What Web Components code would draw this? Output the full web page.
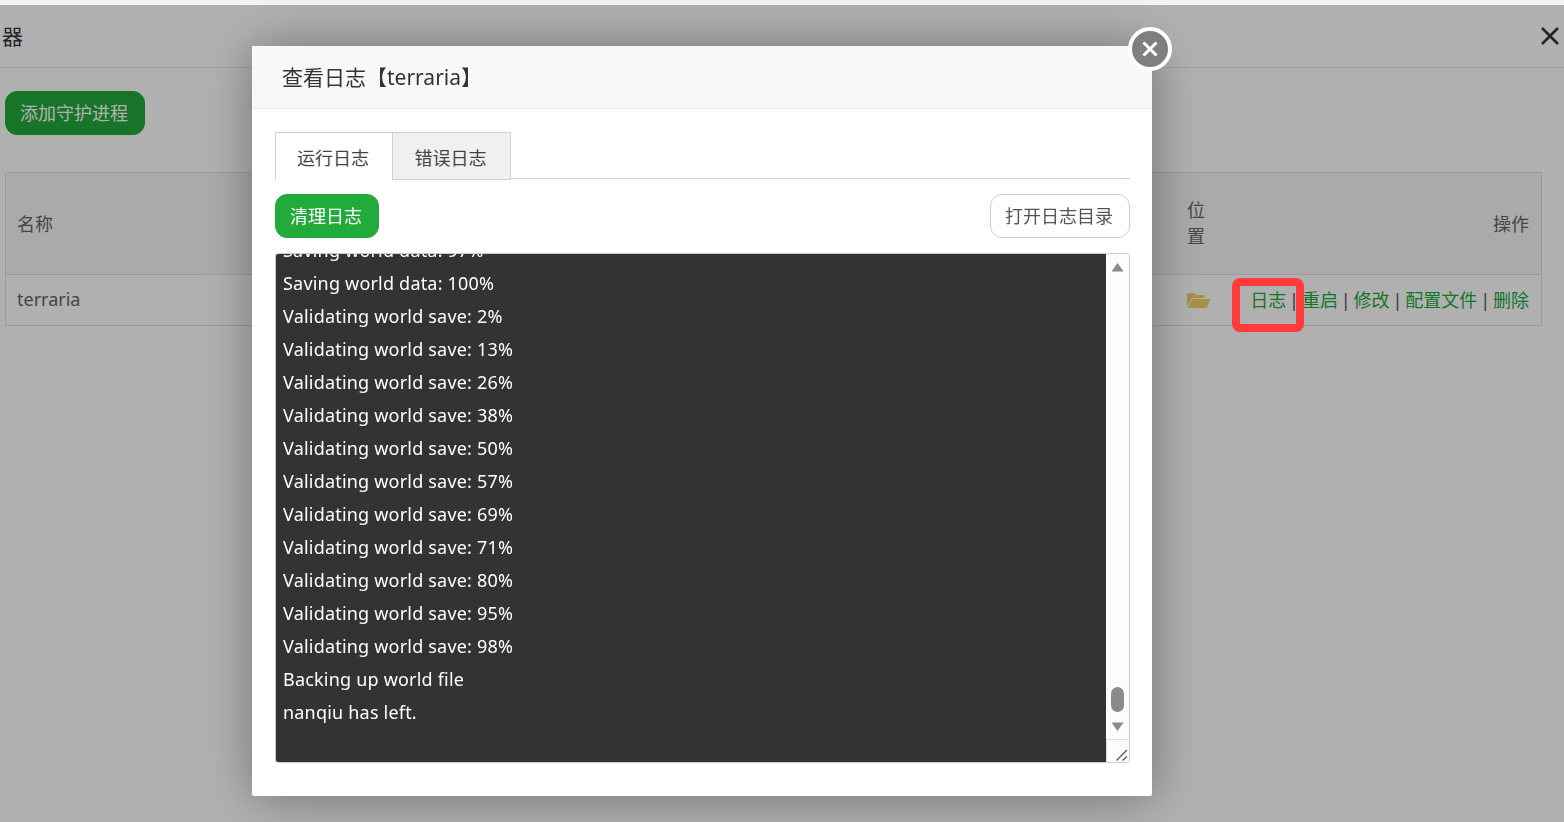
<!DOCTYPE html>
<html lang="zh">
<head>
<meta charset="utf-8">
<title>查看日志</title>
<style>
html, body {
    margin: 0;
    height: 100%;
    overflow: hidden;
    background: #fff;
    color: #333;
    font: 18px "Noto Sans", "Noto Sans CJK SC", sans-serif;
}
</style>
</head>
<body>
<app-page>
    <page-bar slot="bar" title-text="器"></page-bar>
    <act-button tone="solid" slot="action">添加守护进程</act-button>
    <proc-table></proc-table>
</app-page>
<log-modal heading="查看日志【terraria】"></log-modal>

<script>
class AppPage extends HTMLElement {
    constructor() {
        super();
        this.attachShadow({ mode: 'open' }).innerHTML = `
<style>
:host { display: block; border-top: 5px solid #f3f3f3; }
.action { display: flex; padding: 23px 5px 37px; }
</style>
<slot name="bar"></slot>
<div class="action"><slot name="action"></slot></div>
<slot></slot>
`;
    }
}
customElements.define('app-page', AppPage);

class PageBar extends HTMLElement {
    constructor() {
        super();
        this.attachShadow({ mode: 'open' }).innerHTML = `
<style>
:host { display: flex; align-items: center; justify-content: space-between; height: 60px; border-bottom: 1px solid #e6e6e6; padding: 0 5px 2px 2px; font-size: 21px; }
svg { display: block; margin-top: 2px; }
</style>
<span id="t"></span>
<svg width="18" height="18" viewBox="0 0 18 18"><path d="M1 1 17 17M17 1 1 17" stroke="#333" stroke-width="2.6" fill="none"/></svg>
`;
        this.shadowRoot.getElementById('t').textContent = this.getAttribute('title-text');
    }
}
customElements.define('page-bar', PageBar);

class ActButton extends HTMLElement {
    constructor() {
        super();
        this.attachShadow({ mode: 'open' }).innerHTML = `
<style>
:host { display: inline-flex; align-items: center; justify-content: center; box-sizing: border-box; height: 44px; padding: 0 16px 2px 14px; border-radius: 12px; background: #fff; border: 1px solid #ccc; color: #555; white-space: nowrap; }
:host([tone="solid"]) { background: #22aa3c; border-color: #22aa3c; color: #fff; }
</style>
<slot></slot>
`;
    }
}
customElements.define('act-button', ActButton);

class ProcTable extends HTMLElement {
    constructor() {
        super();
        this.attachShadow({ mode: 'open' }).innerHTML = `
<style>
:host { display: block; margin: 0 22px 0 5px; border: 1px solid #e0e0e0; color: #666; }
.row { display: grid; grid-template-columns: 1fr 45px 309px; align-items: center; box-sizing: border-box; padding-bottom: 2px; }
.head { height: 102px; background: #f6f6f6; border-bottom: 1px solid #e0e0e0; }
.body { height: 50px; }
.name { padding-left: 11px; }
.pos { width: 20px; line-height: 26px; }
.ops { text-align: right; padding-right: 12px; white-space: nowrap; }
a { color: #22aa3c; text-decoration: none; }
.sep { color: #555; margin: 0 2.9px; }
.mark { position: absolute; left: 1232px; top: 278px; width: 72px; height: 54px; box-sizing: border-box; border: 8px solid #ff3b3b; border-radius: 8px; z-index: 30; }
svg { display: block; margin-top: 2px; }
</style>
<div class="row head">
    <div class="name">名称</div>
    <div class="pos">位置</div>
    <div class="ops">操作</div>
</div>
<div class="row body">
    <div class="name">terraria</div>
    <div><svg width="24" height="17" viewBox="0 0 24 17"><path d="M0 15V2.500Q0 1 1.500 1H7l2 2h7q1.500 0 1.500 1.500V6H6Q4.500 6 4 7.500Z" fill="#f0d264"/><path d="M5 7H23.500L19.500 16H1Z" fill="#f0d264"/></svg></div>
    <div class="ops"><a>日志</a><span class="sep">|</span><a>重启</a><span class="sep">|</span><a>修改</a><span class="sep">|</span><a>配置文件</a><span class="sep">|</span><a>删除</a></div>
</div>
<div class="mark"></div>
`;
    }
}
customElements.define('proc-table', ProcTable);

class LogView extends HTMLElement {
    constructor() {
        super();
        const lines = [
            'Saving world data: 97%',
            'Saving world data: 100%',
            'Validating world save: 2%',
            'Validating world save: 13%',
            'Validating world save: 26%',
            'Validating world save: 38%',
            'Validating world save: 50%',
            'Validating world save: 57%',
            'Validating world save: 69%',
            'Validating world save: 71%',
            'Validating world save: 80%',
            'Validating world save: 95%',
            'Validating world save: 98%',
            'Backing up world file',
            'nanqiu has left.'
        ];
        this.attachShadow({ mode: 'open' }).innerHTML = `
<style>
:host { display: flex; height: 510px; box-sizing: border-box; border: 1px solid #ccc; border-radius: 3px; overflow: hidden; }
.text { flex: 1; background: #333; color: #fff; overflow: hidden; padding-left: 7px; }
.lines { margin-top: -20px; line-height: 33px; letter-spacing: .2px; }
.lines div { white-space: nowrap; }
.bar { width: 23px; background: #fcfcfc; display: flex; flex-direction: column; align-items: center; }
.track { flex: 1; width: 100%; display: flex; flex-direction: column; align-items: center; padding-top: 8px; box-sizing: border-box; }
.thumb { width: 13px; height: 25px; border-radius: 7px; background: #8a8a8a; margin-top: 415px; }
.down { margin-top: 10px; }
.corner { width: 23px; height: 23px; border-top: 1px solid #ddd; border-left: 1px solid #ddd; box-sizing: border-box; }
svg { display: block; }
</style>
<div class="text"><div class="lines">${lines.map(l => `<div>${l}</div>`).join('')}</div></div>
<div class="bar">
    <div class="track">
        <svg width="13" height="10" viewBox="0 0 13 10"><path d="M6.500 1 12.500 9.500H.5Z" fill="#8a8a8a"/></svg>
        <div class="thumb"></div>
        <svg class="down" width="13" height="10" viewBox="0 0 13 10"><path d="M.5.5H12.500L6.500 9Z" fill="#8a8a8a"/></svg>
    </div>
    <div class="corner"><svg width="22" height="22" viewBox="0 0 22 22"><path d="M9.500 20.500 20 10M15.500 20.500 20 16.500" stroke="#555" stroke-width="1.300" fill="none"/></svg></div>
</div>
`;
    }
}
customElements.define('log-view', LogView);

class LogModal extends HTMLElement {
    constructor() {
        super();
        this.attachShadow({ mode: 'open' }).innerHTML = `
<style>
:host { position: fixed; inset: 5px 0 0 0; background: rgba(0,0,0,.31); display: block; z-index: 10; }
.box { position: absolute; left: 252px; top: 41px; width: 900px; height: 750px; background: #fff; border-radius: 2px; box-shadow: 1px 1px 50px rgba(0,0,0,.36); display: flex; flex-direction: column; }
.title { height: 63px; box-sizing: border-box; padding: 0 0 3px 30px; background: #f8f8f8; border-bottom: 1px solid #eee; display: flex; align-items: center; font-size: 21px; color: #333; }
.main { padding: 23px 22px 0 23px; }
.tabs { display: flex; height: 48px; position: relative; box-sizing: border-box; }
.tabs::after { content: ""; position: absolute; left: 0; right: 0; top: 46px; border-top: 1px solid #cfcde0; }
.tab { width: 119px; box-sizing: border-box; border: 1px solid #cfcde0; padding: 1px 2px 0 0; display: flex; align-items: center; justify-content: center; background: #f0f0f0; color: #444; position: relative; z-index: 1; margin-left: -1px; }
.tab:first-child { width: 118px; margin-left: 0; background: #fff; border-bottom-color: #fff; }
.tools { display: flex; justify-content: space-between; margin: 14px 0 15px; }
.shut { position: absolute; right: -20px; top: -19px; width: 44px; height: 44px; box-sizing: border-box; border: 4px solid #fff; border-radius: 50%; background: #7f7f7f; display: flex; align-items: center; justify-content: center; }
svg { display: block; }
</style>
<div class="box">
    <div class="title" id="h"></div>
    <div class="main">
        <div class="tabs"><div class="tab">运行日志</div><div class="tab">错误日志</div></div>
        <div class="tools"><act-button tone="solid">清理日志</act-button><act-button>打开日志目录</act-button></div>
        <log-view></log-view>
    </div>
    <div class="shut"><svg width="18" height="18" viewBox="0 0 18 18"><path d="M2.500 2.500 15.500 15.500M15.500 2.500 2.500 15.500" stroke="#fff" stroke-width="3" fill="none"/></svg></div>
</div>
`;
        this.shadowRoot.getElementById('h').textContent = this.getAttribute('heading');
    }
}
customElements.define('log-modal', LogModal);
</script>
</body>
</html>
